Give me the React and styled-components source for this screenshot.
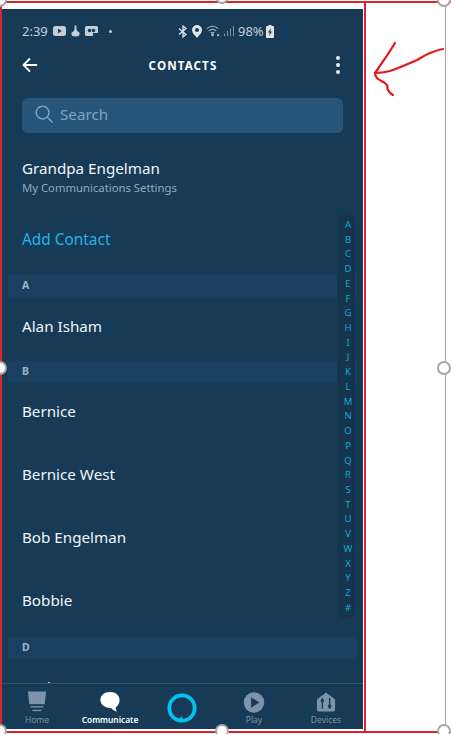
import React from 'react'
import styled, { createGlobalStyle } from 'styled-components'

const LETTERS = 'ABCDEFGHIJKLMNOPQRSTUVWXYZ#'.split('')
const FONT = '"Noto Sans", "Open Sans", sans-serif'

function App() {
  return (
    <Page>
      <GlobalStyle />
      <Phone>
        <StatusBar>
          <StatusLeft>
            <Time>2:39</Time>
            <svg width="13" height="10" viewBox="0 0 13 10"><rect width="13" height="10" rx="2.5" fill="#c4ced6" /><path d="M5 2.8v4.4L8.8 5z" fill="#173a56" /></svg>
            <svg width="9" height="12" viewBox="0 0 10 12"><path d="M4 0h2v4l1 2 2.5 2v1.5C9.500 11 8 12 5 12S.5 11 .5 9.500V8L3 6l1-2z" fill="#c4ced6" /></svg>
            <svg width="14" height="11" viewBox="0 0 14 11"><rect width="13" height="10" rx="1.5" fill="#c4ced6" /><circle cx="4.500" cy="4.500" r="1.800" fill="#173a56" /><circle cx="8.500" cy="4.500" r="1.800" fill="#173a56" /><rect x="8" y="7" width="5" height="3" fill="#173a56" /></svg>
            <Dot />
          </StatusLeft>
          <StatusRight>
            <svg width="10" height="13" viewBox="0 0 10 13" fill="none" stroke="#dfe5ea" strokeWidth="1.300"><path d="M1 3.500l7 6-3 2.500V1l3 2.500-7 6" /></svg>
            <svg width="10" height="13" viewBox="0 0 10 13"><path fillRule="evenodd" d="M5 0a5 5 0 0 1 5 5c0 3-3 5.500-5 8-2-2.500-5-5-5-8a5 5 0 0 1 5-5zm0 3a2 2 0 1 0 0 4 2 2 0 0 0 0-4z" fill="#dfe5ea" /></svg>
            <svg width="14" height="12" viewBox="0 0 15 12" fill="none" stroke="#aab8c4" strokeWidth="1.100"><path d="M1 3.500C4.500 0 9.500 0 13 3.500M3 5.800c2.600-2.300 5.400-2.300 8 0M5 8c1.400-1 2.600-1 4 0" /><circle cx="7" cy="10" r="1" fill="#aab8c4" /><circle cx="13" cy="10.500" r=".7" fill="#aab8c4" /></svg>
            <svg width="10" height="10" viewBox="0 0 10 10" fill="#7f93a4"><rect x="0" y="7.500" width="1" height="2.500" /><rect x="3" y="5" width="1" height="5" /><rect x="6" y="2.500" width="1" height="7.500" /><rect x="9" y="0" width="1" height="10" /></svg>
            <Percent>98%</Percent>
            <svg width="8" height="13" viewBox="0 0 8 13"><path fillRule="evenodd" d="M2.500 0h3v1H7a1 1 0 0 1 1 1v10a1 1 0 0 1-1 1H1a1 1 0 0 1-1-1V2a1 1 0 0 1 1-1h1.500zM4.800 3L2 7.500h1.700L3.200 11 6 6.500H4.300z" fill="#dfe5ea" /></svg>
          </StatusRight>
        </StatusBar>

        <Header>
          <svg width="16" height="16" viewBox="0 0 16 16" fill="none" stroke="#fff" strokeWidth="1.800" strokeLinecap="round" strokeLinejoin="round"><path d="M14.500 8H1.500M7.500 2L1.500 8l6 6" /></svg>
          <Title>CONTACTS</Title>
          <Kebab><i /><i /><i /></Kebab>
        </Header>

        <SearchBox>
          <svg width="18" height="18" viewBox="0 0 19 19" fill="none" stroke="#7fa6c2" strokeWidth="1.500" strokeLinecap="round"><circle cx="8" cy="8" r="6.700" /><path d="M13 13l5 5" /></svg>
          <SearchText>Search</SearchText>
        </SearchBox>

        <Scroller>
          <Profile>
            <Name>Grandpa Engelman</Name>
            <Sub>My Communications Settings</Sub>
          </Profile>
          <AddContact>Add Contact</AddContact>
          <Section>A</Section>
          <Contact $tall>Alan Isham</Contact>
          <Section>B</Section>
          <Contact>Bernice</Contact>
          <Contact>Bernice West</Contact>
          <Contact>Bob Engelman</Contact>
          <Contact>Bobbie</Contact>
          <Section $gap>D</Section>
          <Contact>Dad</Contact>
          <LetterIndex>
            {LETTERS.map((l) => <Letter key={l}>{l}</Letter>)}
          </LetterIndex>
        </Scroller>

        <Nav>
          <NavItem>
            <svg width="20" height="23" viewBox="0 0 22 24" fill="#7d93a9"><path d="M1 0h20l-1.500 14h-17z" /><rect x="4" y="16" width="14" height="1.500" /><rect x="6" y="20" width="10" height="1.500" /></svg>
            <NavLabel>Home</NavLabel>
          </NavItem>
          <NavItem>
            <svg width="22" height="23" viewBox="0 0 22 24" fill="#fff"><path d="M11 1c6 0 10 3.500 10 8.500 0 3.700-2 6.500-4 7.500 0 2 .5 3.500 1.500 4.500-3-.5-5-2-6-3.500C6 18 1 14.500 1 9.500 1 4.500 5 1 11 1z" /></svg>
            <NavLabel $active>Communicate</NavLabel>
          </NavItem>
          <NavItem $alexa>
            <svg width="30" height="32" viewBox="0 0 30 32" fill="none"><circle cx="15" cy="15" r="12.700" stroke="#00c2f3" strokeWidth="3.800" /><path d="M11 27l4-4 1 6z" fill="#00c2f3" /></svg>
          </NavItem>
          <NavItem>
            <svg width="22" height="23" viewBox="0 0 22 24"><circle cx="11" cy="12" r="10.700" fill="#7d93a9" /><path d="M8 6.500v11l8.500-5.500z" fill="#173a56" /></svg>
            <NavLabel>Play</NavLabel>
          </NavItem>
          <NavItem>
            <svg width="20" height="23" viewBox="0 0 22 24"><path d="M11 1l9 7c1 .8 1 1.200 1 2.500V20a2 2 0 0 1-2 2H3a2 2 0 0 1-2-2V10.500C1 9.200 1 8.800 2 8z" fill="#7d93a9" /><g stroke="#173a56" strokeWidth="1.500" fill="#173a56"><path d="M7 7v12M15 7v12" fill="none" /><circle cx="7" cy="10" r="1.200" /><circle cx="15" cy="16" r="1.200" /></g></svg>
            <NavLabel>Devices</NavLabel>
          </NavItem>
        </Nav>
      </Phone>

      {/* markup drawn over the screenshot */}
      <FrameLeft />
      <FrameTop />
      <FrameBottom />
      <FrameRed />
      <FrameGray />
      <Handle style={{ left: -7, top: -7 }} />
      <Handle style={{ left: 215, top: -10 }} />
      <Handle style={{ left: 437, top: -7 }} />
      <Handle style={{ left: -7, top: 361 }} />
      <Handle style={{ left: 437, top: 361 }} />
      <Handle style={{ left: -7, top: 724 }} />
      <Handle style={{ left: 215, top: 724 }} />
      <Handle style={{ left: 437, top: 724 }} />
      <Arrow width="72" height="56" viewBox="0 0 72 56" fill="none" stroke="#e8141c" strokeWidth="2.200" strokeLinecap="round" strokeLinejoin="round">
        <path d="M22 2C16 12 9 22 2 32c6 0 11-1 15-2 9-3 18-7 27-11 6-3 11-8 26-11" />
        <path d="M2 32c0 3 1 4 2 5 3 3 8 4 10 7 1 2 0 4 1 5 1 2 3 4 5 5" />
      </Arrow>
    </Page>
  )
}

export default App

const GlobalStyle = createGlobalStyle`
  html, body {
    margin: 0;
    padding: 0;
    background: #fff;
  }
  * {
    box-sizing: border-box;
  }
`

const Page = styled.div`
  position: relative;
  width: 451px;
  height: 734px;
  padding: 9px 0 0 2px;
  overflow: hidden;
  background: #fff;
  font-family: ${FONT};
`

const Phone = styled.div`
  display: flex;
  flex-direction: column;
  width: 361px;
  height: 720px;
  background: #173a56;
  color: #fff;
`

const StatusBar = styled.div`
  display: flex;
  align-items: center;
  height: 44px;
  padding: 0 20px;
  flex-shrink: 0;
`

const StatusLeft = styled.div`
  display: flex;
  align-items: center;
  gap: 5px;
  width: 156px;
`

const StatusRight = styled.div`
  display: flex;
  align-items: center;
  gap: 4px;
`

const Time = styled.span`
  font-size: 13px;
  color: #c4ced6;
`

const Percent = styled(Time)`
  margin-right: -2px;
`

const Dot = styled.span`
  width: 3px;
  height: 3px;
  margin-left: 5px;
  border-radius: 50%;
  background: #c4ced6;
`

const Header = styled.div`
  display: flex;
  align-items: center;
  justify-content: space-between;
  height: 24px;
  padding: 0 23px 0 20px;
  flex-shrink: 0;
`

const Title = styled.div`
  font-size: 11.600px;
  font-weight: 700;
  letter-spacing: 1.1px;
  margin-right: 8px;
`

const Kebab = styled.div`
  display: flex;
  flex-direction: column;
  gap: 3px;
  i {
    width: 4px;
    height: 4px;
    border-radius: 50%;
    background: #e8edf1;
  }
`

const SearchBox = styled.div`
  display: flex;
  align-items: center;
  gap: 7px;
  height: 35px;
  margin: 21px 20px 0;
  padding: 0 13px 3px;
  border-radius: 6px;
  background: #27557a;
  flex-shrink: 0;
`

const SearchText = styled.span`
  font-size: 15.200px;
  color: #7fa6c2;
`

const Scroller = styled.div`
  position: relative;
  flex: 1;
  overflow: hidden;
`

const Profile = styled.div`
  padding: 23px 20px 0;
  height: 76px;
`

const Name = styled.div`
  font-size: 15.200px;
  line-height: 24px;
  color: #f2f5f7;
`

const Sub = styled.div`
  font-size: 11.300px;
  line-height: 16px;
  color: #8fabc0;
`

const AddContact = styled.div`
  height: 66px;
  padding: 18px 20px 0;
  font-size: 15.400px;
  line-height: 26px;
  color: #1fb6e4;
`

const Section = styled.div`
  display: flex;
  align-items: center;
  height: 22px;
  margin: ${(p) => (p.$gap ? '2px' : '0')} 6px 0;
  padding: 0 14px 2px;
  font-size: 10.500px;
  font-weight: 700;
  color: #9db6c9;
  background: #1a4061;
`

const Contact = styled.div`
  display: flex;
  align-items: center;
  height: ${(p) => (p.$tall ? '64px' : '63px')};
  padding: 0 20px 7px;
  font-size: 15.200px;
  color: #f2f5f7;
`

const LetterIndex = styled.div`
  position: absolute;
  top: 82px;
  right: 8px;
  width: 18px;
  padding: 3px 0 3px 4px;
  border-radius: 7px;
  background: #15344e;
`

const Letter = styled.div`
  height: 14.730px;
  font-size: 9.500px;
  line-height: 14.730px;
  text-align: center;
  color: #14a8d8;
`

const Nav = styled.div`
  display: grid;
  grid-template-columns: 70px 76px 68px 76px 68px;
  height: 46px;
  border-top: 1px solid #2c5470;
  background: #173a56;
  flex-shrink: 0;
`

const NavItem = styled.div`
  display: flex;
  flex-direction: column;
  align-items: center;
  padding-top: ${(p) => (p.$alexa ? '9px' : '7px')};
  svg {
    flex-shrink: 0;
  }
`

const NavLabel = styled.span`
  margin-top: 0;
  font-size: ${(p) => (p.$active ? '8.300px' : '8.500px')};
  line-height: 12px;
  font-weight: ${(p) => (p.$active ? 600 : 400)};
  color: ${(p) => (p.$active ? '#fff' : '#7d93a9')};
`

const FrameRed = styled.div`
  position: absolute;
  left: 364px;
  top: 1px;
  bottom: 3px;
  width: 2px;
  background: #d9252b;
`

const FrameGray = styled.div`
  position: absolute;
  left: 445px;
  top: 3px;
  bottom: 3px;
  width: 1px;
  background: #a6a6a6;
`

const FrameTop = styled.div`
  position: absolute;
  left: 0;
  right: 0;
  top: 1px;
  height: 2px;
  background: #d9252b;
`

const FrameBottom = styled.div`
  position: absolute;
  left: 0;
  right: 0;
  bottom: 1px;
  height: 2px;
  background: #d9252b;
`

const FrameLeft = styled.div`
  position: absolute;
  left: 0;
  top: 1px;
  bottom: 1px;
  width: 2px;
  background: #d9252b;
`

const Handle = styled.div`
  position: absolute;
  width: 14px;
  height: 14px;
  border: 2px solid #a6a6a6;
  border-radius: 50%;
  background: #fff;
`

const Arrow = styled.svg`
  position: absolute;
  left: 373px;
  top: 41px;
`
